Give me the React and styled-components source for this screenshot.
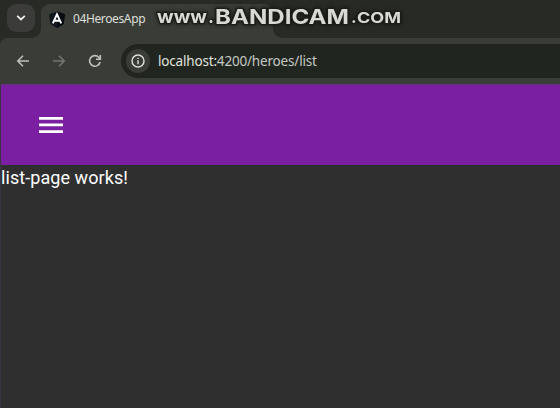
import React from "react";
import styled, { createGlobalStyle } from "styled-components";

const GlobalStyle = createGlobalStyle`
  * { box-sizing: border-box; }
  html, body { margin: 0; padding: 0; background: #2f2f2f; overflow: hidden; }
  svg { display: block; flex: none; }
`;

const Window = styled.div`
  position: relative;
  width: 560px;
  height: 408px;
  display: flex;
  flex-direction: column;
  overflow: hidden;
  background: #282a26;
  font-family: "Noto Sans", "Open Sans", sans-serif;
`;

const TabStrip = styled.div`
  display: flex;
  align-items: flex-start;
  height: 38px;
  padding: 4px 0 0 7px;
  background: #282a26;
`;

const TabSearch = styled.div`
  display: flex;
  align-items: center;
  justify-content: center;
  width: 28px;
  height: 28px;
  margin-right: 6px;
  border-radius: 9px;
  background: #3b3c39;
`;

const Tab = styled.div`
  position: relative;
  display: flex;
  align-items: center;
  width: 232px;
  height: 34px;
  padding: 0 0 4px 8px;
  gap: 8px;
  border-radius: 9px 9px 0 0;
  background: #3a3d37;
  &::before, &::after {
    content: "";
    position: absolute;
    bottom: 0;
    width: 9px;
    height: 9px;
  }
  &::before {
    left: -9px;
    background: radial-gradient(circle at 0 0, transparent 8.5px, #3a3d37 9px);
  }
  &::after {
    right: -9px;
    background: radial-gradient(circle at 100% 0, transparent 8.5px, #3a3d37 9px);
  }
`;

const TabTitle = styled.span`
  font-size: 12px;
  line-height: 20px;
  letter-spacing: -0.38px;
  color: #dedfda;
`;

const Toolbar = styled.div`
  display: flex;
  align-items: center;
  height: 46px;
  padding-left: 15px;
  border-radius: 7px 0 0 0;
  background: #3a3d37;
`;

const NavButton = styled.div`
  display: flex;
  width: 16px;
  height: 16px;
  margin-right: ${(p) => p.$gap}px;
  color: ${(p) => (p.$disabled ? "#747671" : "#bfc1bb")};
`;

const AddressBar = styled.div`
  display: flex;
  align-items: center;
  flex: 1;
  height: 34px;
  padding-left: 5px;
  gap: 8px;
  border-radius: 17px 0 0 17px;
  background: #212520;
`;

const SiteInfo = styled.div`
  display: flex;
  align-items: center;
  justify-content: center;
  width: 24px;
  height: 24px;
  border-radius: 50%;
  background: #3a3c38;
`;

const Url = styled.span`
  font-size: 13.5px;
  line-height: 22px;
  letter-spacing: -0.18px;
  color: ${(p) => (p.$host ? "#e0e2dd" : "#c5c9c2")};
  white-space: nowrap;
`;

const Page = styled.main`
  flex: 1;
  border-left: 1px solid #3b3341;
  background: #2f2f2f;
`;

const AppBar = styled.header`
  display: flex;
  align-items: center;
  height: 81px;
  padding-left: 38px;
  border-top: 1px solid #60317a;
  background: #7b1fa2;
`;

const Message = styled.p`
  margin: 0;
  padding-top: 2px;
  font: 400 18px/22px Roboto, sans-serif;
  letter-spacing: 0.07px;
  color: #fff;
`;

const Watermark = styled.svg`
  position: absolute;
  left: 150px;
  top: 0;
  font-family: Inter, sans-serif;
  fill: #d9d9d4;
  stroke: #1b1d19;
  stroke-width: 2.6px;
  stroke-linejoin: round;
  paint-order: stroke;
  filter: drop-shadow(0 0 2px #151713);
`;

const Arrow = ({ flip }) => (
  <svg width="16" height="16" viewBox="0 0 16 16" fill="none" stroke="currentColor" strokeWidth="1.6">
    <path d={flip ? "M2 8H13M8 2.8L13.2 8L8 13.2" : "M14 8H3M8 2.8L2.8 8L8 13.2"} />
  </svg>
);

export default function App() {
  return (
    <Window>
      <GlobalStyle />
      <TabStrip>
        <TabSearch>
          <svg width="10" height="8" viewBox="0 0 10 8" fill="none" stroke="#eeeeea" strokeWidth="1.8">
            <path d="M1.2 1.8L5 5.5L8.8 1.8" />
          </svg>
        </TabSearch>
        <Tab>
          <svg width="16" height="17" viewBox="0 0 16 17">
            <path d="M8 .5L16 3.2L14.7 13L8 17L1.3 13L0 3.2Z" fill="#10171f" />
            <path d="M8 .5L16 3.2L14.7 13L8 17Z" fill="#070c12" />
            <path d="M3.8 12.4L8 3.3L12.2 12.4M5.6 9.7H10.4" fill="none" stroke="#fff" strokeWidth="1.9" />
          </svg>
          <TabTitle>04HeroesApp</TabTitle>
        </Tab>
      </TabStrip>
      <Toolbar>
        <NavButton $gap={20}><Arrow /></NavButton>
        <NavButton $gap={20} $disabled><Arrow flip /></NavButton>
        <NavButton $gap={18}>
          <svg width="16" height="16" viewBox="0 0 16 16" fill="none" stroke="currentColor" strokeWidth="1.6">
            <path d="M13.1 9A5.3 5.3 0 1 1 11.8 4.3L13.2 5.7M13.3 2V6.2H9" />
          </svg>
        </NavButton>
        <AddressBar>
          <SiteInfo>
            <svg width="14" height="14" viewBox="0 0 14 14" fill="none" stroke="#dfe1dc" strokeWidth="1.4">
              <circle cx="7" cy="7" r="6" />
              <path d="M7 6.2V10.3M7 3.7V5.1" />
            </svg>
          </SiteInfo>
          <Url $host>localhost:<Url>4200/heroes/list</Url></Url>
        </AddressBar>
      </Toolbar>
      <Page>
        <AppBar>
          <svg width="24" height="16" viewBox="0 0 24 16" fill="#fff">
            <path d="M0 0H24V2.7H0ZM0 6.6H24V9.3H0ZM0 13.2H24V15.9H0Z" />
          </svg>
        </AppBar>
        <Message>list-page works!</Message>
      </Page>
      <Watermark width="262" height="36">
        <text x="7" y="23" fontSize="18.5" fontWeight="700" textLength="50" lengthAdjust="spacingAndGlyphs">www</text>
        <text x="58" y="23" fontSize="18" fontWeight="700">.</text>
        <text x="65" y="23.6" fontSize="20" fontWeight="750" textLength="134" lengthAdjust="spacingAndGlyphs">BANDICAM</text>
        <text x="201" y="23" fontSize="17" fontWeight="700">.</text>
        <text x="207" y="23" fontSize="14.3" fontWeight="650" textLength="44" lengthAdjust="spacingAndGlyphs">COM</text>
      </Watermark>
    </Window>
  );
}
